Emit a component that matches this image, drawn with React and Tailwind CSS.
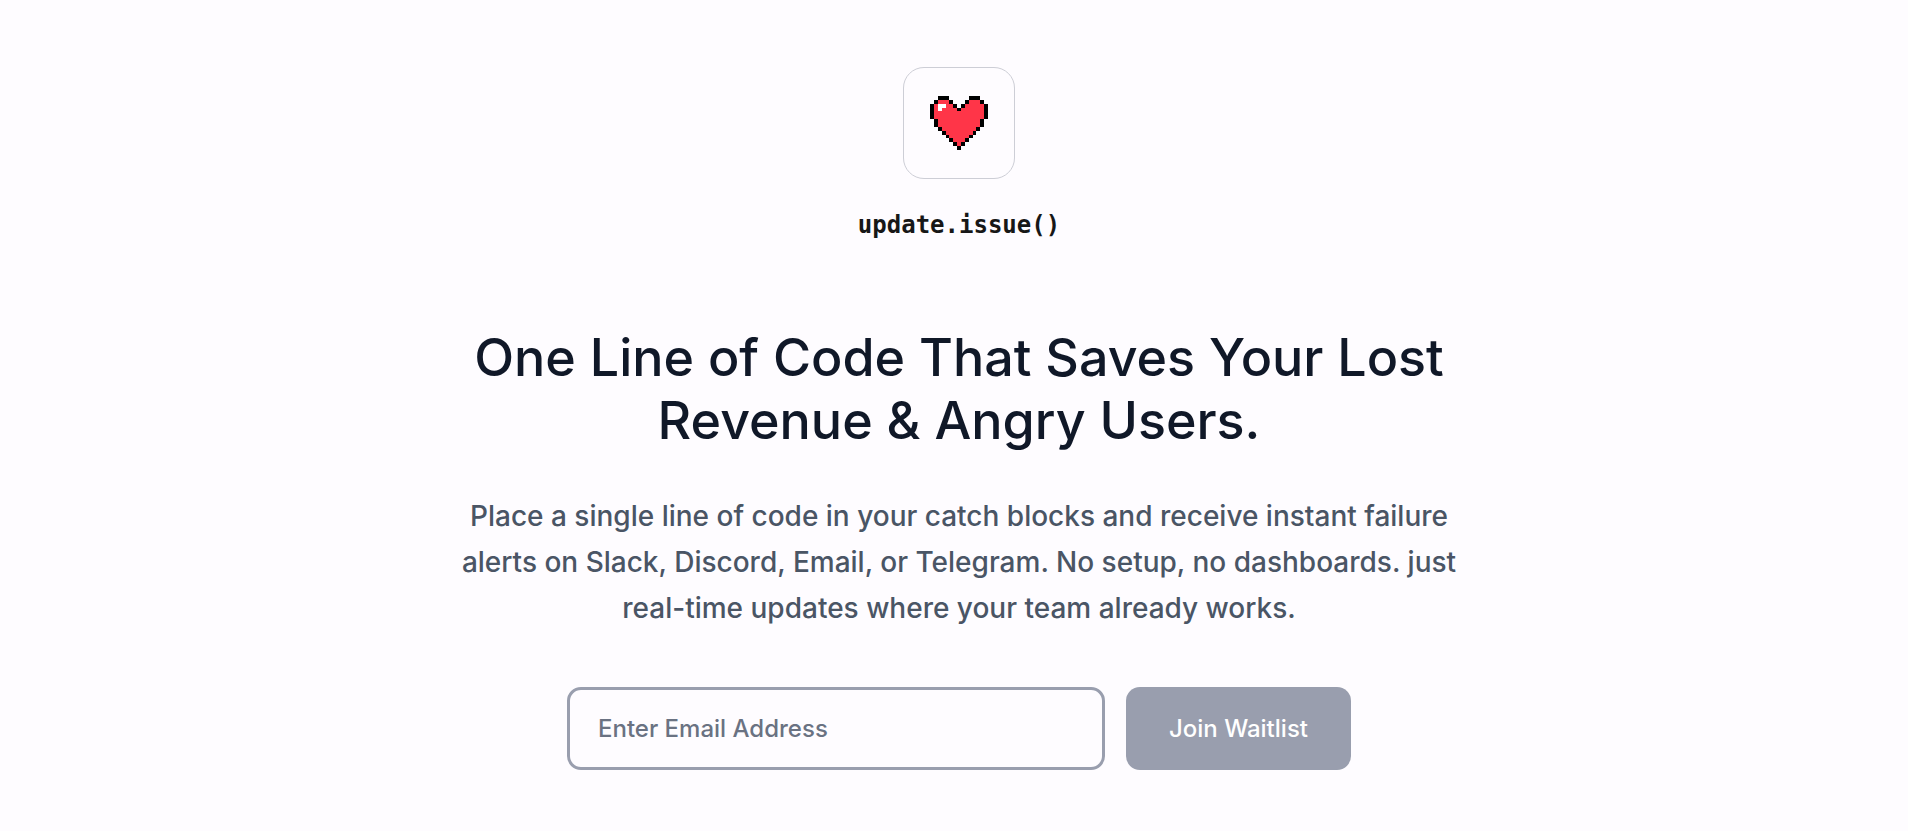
// 15x14 sprite: k = outline, r = fill, w = highlight
const HEART = [
    '..kkk.....kkk..',
    '.krrrk...krrrk.',
    'krwwrrk.krrrrrk',
    'krwrrrrkrrrrrrk',
    'krrrrrrrrrrrrrk',
    'krrrrrrrrrrrrrk',
    '.krrrrrrrrrrrk.',
    '.krrrrrrrrrrrk.',
    '..krrrrrrrrrk..',
    '...krrrrrrrk...',
    '....krrrrrk....',
    '.....krrrk.....',
    '......krk......',
    '.......k.......',
];

const COLORS = { k: '#000000', r: '#ff3548', w: '#ffffff' };

function PixelHeart({ className }) {
    return (
        <svg viewBox="0 0 15 14" className={className} shapeRendering="crispEdges" aria-hidden="true">
            {HEART.map((row, y) =>
                [...row].map((cell, x) =>
                    cell === '.' ? null : (
                        <rect key={`${x}-${y}`} x={x} y={y} width="1" height="1" fill={COLORS[cell]} />
                    )
                )
            )}
        </svg>
    );
}

function WaitlistForm() {
    return (
        <form className="mt-[56px] flex w-full max-w-[784px] gap-[21px]" onSubmit={(e) => e.preventDefault()}>
            <input
                type="email"
                aria-label="Enter Email Address"
                placeholder="Enter Email Address"
                className="min-w-0 flex-1 rounded-[14px] border-3 border-[#999eae] bg-transparent px-7 py-[23px] text-2xl leading-[31px] font-medium text-[#101828] outline-none placeholder:text-[#6a7282]"
            />
            <button
                type="submit"
                className="shrink-0 rounded-[14px] bg-[#999eae] px-[43px] py-[26px] text-2xl leading-[31px] font-medium text-white"
            >
                Join Waitlist
            </button>
        </form>
    );
}

export default function App() {
    return (
        <main className="flex min-h-screen flex-col items-center bg-[#fefcff] pt-[67px] pr-4 pb-[61px] pl-[26px] font-['Inter',sans-serif]">
            <div className="flex size-[112px] items-center justify-center rounded-[21px] border border-[#cdced6]">
                <PixelHeart className="h-[54px] w-[58px]" />
            </div>
            <p className="mt-[29px] font-['DejaVu_Sans_Mono',monospace] text-2xl leading-[34px] font-bold text-[#171717]">
                update.issue()
            </p>
            <h1 className="mt-[84px] max-w-[1008px] text-center text-[52px] leading-[63px] font-medium text-[#101828]">
                One Line of Code That Saves Your Lost Revenue &amp; Angry Users.
            </h1>
            <p className="mt-[41px] max-w-[1008px] text-center text-[28px] leading-[46px] font-medium text-[#4a5565]">
                Place a single line of code in your catch blocks and receive instant failure alerts on Slack, Discord,
                Email, or Telegram. No setup, no dashboards. just real-time updates where your team already works.
            </p>
            <WaitlistForm />
        </main>
    );
}
